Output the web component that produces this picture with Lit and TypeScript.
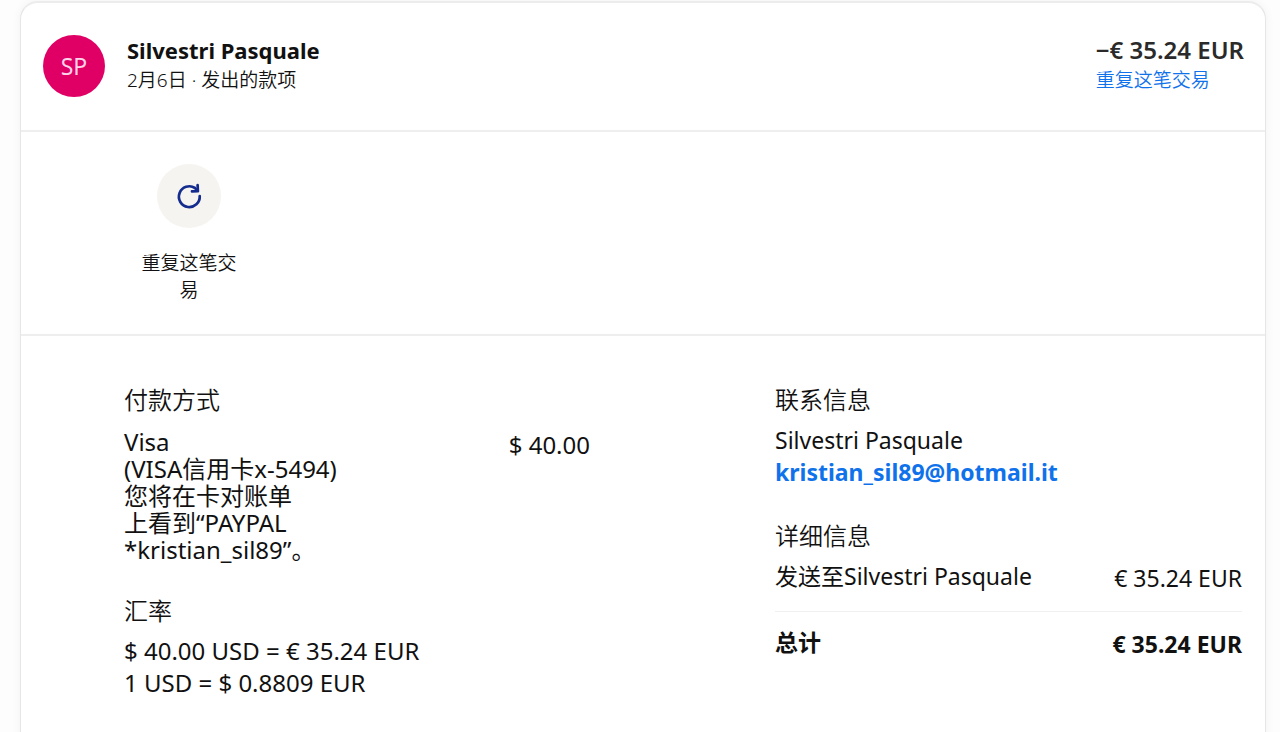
import { LitElement, html, css, svg } from "lit";
import { customElement, property } from "lit/decorators.js";

const repeatIcon = svg`
  <svg viewBox="0 0 28 28" width="28" height="28" fill="none" stroke="#142c8e"
    stroke-width="2.7" stroke-linecap="round" stroke-linejoin="round" aria-hidden="true">
    <path d="M24.7 14A10.4 10.4 0 1 1 20 6L22.2 8.6"></path>
    <path d="M22.6 3L22.9 9.2L17 9.4"></path>
  </svg>`;

@customElement("amount-row")
class AmountRow extends LitElement {
  @property() label = "";
  @property() amount = "";
  @property({ type: Boolean, reflect: true }) total = false;

  static styles = css`
    :host {
      display: flex;
      justify-content: space-between;
      gap: 24px;
      line-height: 32px;
    }
    :host([total]) {
      border-top: 1px solid #f0f0f0;
      margin-top: 17px;
      padding-top: 14px;
      font-weight: 700;
    }
    .amount {
      padding-top: 2px;
      white-space: nowrap;
    }
  `;

  render() {
    return html`<span>${this.label}</span><span class="amount">${this.amount}</span>`;
  }
}

@customElement("app-root")
class AppRoot extends LitElement {
  static styles = css`
    :host {
      display: block;
      min-height: 100vh;
      box-sizing: border-box;
      padding: 1px 14px 0 20px;
      background: #fdfdfd;
      color: #111111;
      font-family: "Noto Sans", "Noto Sans CJK SC", sans-serif;
      font-size: 23px;
      overflow: hidden;
    }
    .card {
      box-sizing: border-box;
      min-height: calc(100vh + 24px);
      margin-bottom: -48px;
      border: 1px solid #e6e6e6;
      border-top: 2px solid #ececec;
      border-radius: 18px;
      background: #ffffff;
      box-shadow: 0 0 10px rgba(0, 0, 0, 0.05);
    }
    h1, h2, p {
      margin: 0;
      font: inherit;
    }
    a {
      color: #1072eb;
      text-decoration: none;
    }
    header {
      display: flex;
      align-items: flex-start;
      gap: 22px;
      padding: 32px 21px 33px 22px;
      border-bottom: 2px solid #eeeeee;
    }
    .avatar {
      display: grid;
      place-items: center;
      width: 62px;
      height: 62px;
      border-radius: 50%;
      background: #e00065;
      color: #ffd3ea;
    }
    .who {
      flex: 1;
    }
    .title {
      font-size: 22px;
      line-height: 30px;
      font-weight: 700;
    }
    .sum {
      font-size: 24px;
      line-height: 30px;
      font-weight: 600;
      color: #2a2a2a;
    }
    .sub {
      font-size: 19px;
      line-height: 31px;
      font-weight: 350;
    }
    .actions {
      padding: 32px 110px 30px;
      border-bottom: 2px solid #eeeeee;
    }
    .action {
      display: grid;
      justify-items: center;
      gap: 22px;
      width: 116px;
      padding: 0 10px;
      border: 0;
      background: none;
      color: inherit;
      font: 350 19px/27px "Noto Sans", "Noto Sans CJK SC", sans-serif;
    }
    .disc {
      display: grid;
      place-items: center;
      width: 64px;
      height: 64px;
      border-radius: 50%;
      background: #f5f4f0;
    }
    .details {
      display: grid;
      grid-template-columns: 466fr 467fr;
      column-gap: 185px;
      padding: 48px 23px 32px 103px;
    }
    section + section {
      margin-top: 32px;
    }
    h2 {
      font-size: 24px;
      line-height: 32px;
      margin-bottom: 8px;
      font-weight: 350;
    }
    .method {
      display: flex;
      justify-content: space-between;
      padding-top: 4px;
      font-size: 24px;
      line-height: 27px;
    }
    .method .amount {
      padding-top: 3px;
    }
    .line {
      line-height: 32px;
    }
    .rate {
      font-size: 24px;
    }
    .mail {
      font-weight: 700;
    }
  `;

  render() {
    return html`
      <main class="card">
        <header>
          <div class="avatar">SP</div>
          <div class="who">
            <h1 class="title">Silvestri Pasquale</h1>
            <p class="sub">2月6日 · 发出的款项</p>
          </div>
          <div>
            <p class="sum">−€ 35.24 EUR</p>
            <p class="sub"><a href="#repeat">重复这笔交易</a></p>
          </div>
        </header>
        <div class="actions">
          <button class="action" type="button">
            <span class="disc">${repeatIcon}</span>
            <span>重复这笔交易</span>
          </button>
        </div>
        <div class="details">
          <div>
            <section>
              <h2>付款方式</h2>
              <div class="method">
                <p>Visa<br />(VISA信用卡x-5494)<br />您将在卡对账单<br />上看到“PAYPAL<br />*kristian_sil89”。</p>
                <span class="amount">$ 40.00</span>
              </div>
            </section>
            <section>
              <h2>汇率</h2>
              <p class="line rate">$ 40.00 USD = € 35.24 EUR</p>
              <p class="line rate">1 USD = $ 0.8809 EUR</p>
            </section>
          </div>
          <div>
            <section>
              <h2>联系信息</h2>
              <p class="line">Silvestri Pasquale</p>
              <p class="line"><a class="mail" href="mailto:kristian_sil89@hotmail.it">kristian_sil89@hotmail.it</a></p>
            </section>
            <section>
              <h2>详细信息</h2>
              <amount-row label="发送至Silvestri Pasquale" amount="€ 35.24 EUR"></amount-row>
              <amount-row total label="总计" amount="€ 35.24 EUR"></amount-row>
            </section>
          </div>
        </div>
      </main>
    `;
  }
}
